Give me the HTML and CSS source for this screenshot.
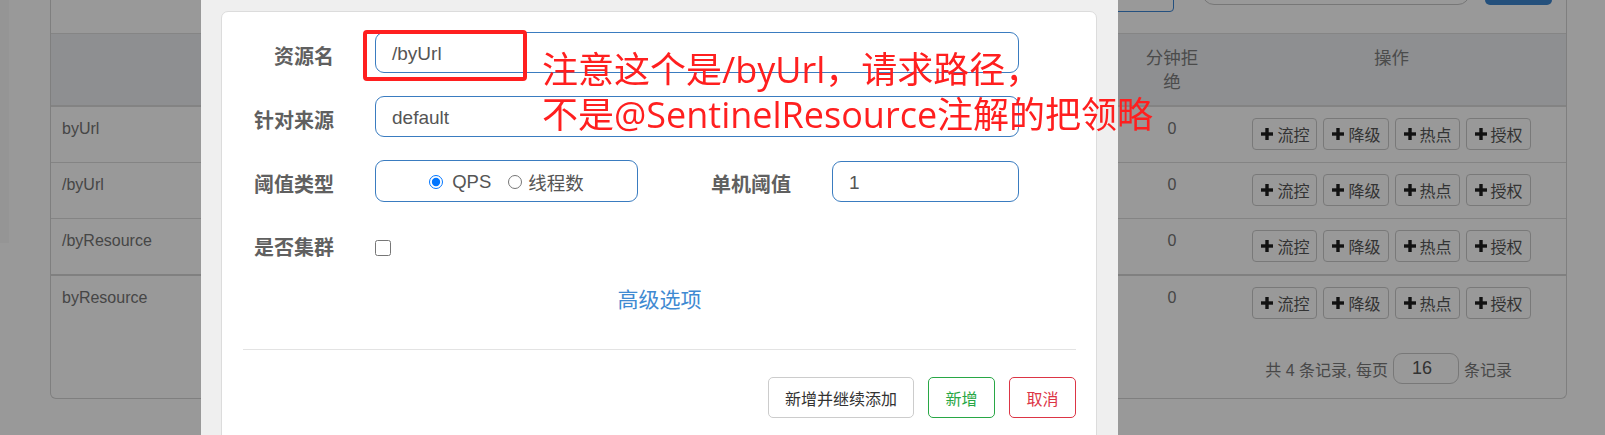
FILE: index.html
```html
<!DOCTYPE html>
<html lang="zh-CN">
<head>
<meta charset="utf-8">
<title>新增流控规则</title>
<link rel="stylesheet" href="styles.css">
</head>
<body>
<div class="page">
  <aside class="side-strip"></aside>
  <main class="content">
    <section class="panel">
      <div class="toolbar">
        <button class="tb-outline" type="button"></button>
        <div class="tb-search"></div>
        <button class="tb-primary" type="button"></button>
      </div>
      <div class="table">
        <div class="trow thead">
          <div class="cell"></div>
          <div class="cell num">分钟拒绝</div>
          <div class="cell ops-head">操作</div>
        </div>
        <div class="trow">
          <div class="cell name">byUrl</div>
          <div class="cell num">0</div>
          <div class="cell ops">
            <button class="op-btn" type="button"><svg class="plus" viewBox="0 0 12 12"><rect x="0" y="4.3" width="12" height="3.4"/><rect x="4.3" y="0" width="3.4" height="12"/></svg>流控</button>
            <button class="op-btn" type="button"><svg class="plus" viewBox="0 0 12 12"><rect x="0" y="4.3" width="12" height="3.4"/><rect x="4.3" y="0" width="3.4" height="12"/></svg>降级</button>
            <button class="op-btn" type="button"><svg class="plus" viewBox="0 0 12 12"><rect x="0" y="4.3" width="12" height="3.4"/><rect x="4.3" y="0" width="3.4" height="12"/></svg>热点</button>
            <button class="op-btn" type="button"><svg class="plus" viewBox="0 0 12 12"><rect x="0" y="4.3" width="12" height="3.4"/><rect x="4.3" y="0" width="3.4" height="12"/></svg>授权</button>
          </div>
        </div>
        <div class="trow">
          <div class="cell name">/byUrl</div>
          <div class="cell num">0</div>
          <div class="cell ops">
            <button class="op-btn" type="button"><svg class="plus" viewBox="0 0 12 12"><rect x="0" y="4.3" width="12" height="3.4"/><rect x="4.3" y="0" width="3.4" height="12"/></svg>流控</button>
            <button class="op-btn" type="button"><svg class="plus" viewBox="0 0 12 12"><rect x="0" y="4.3" width="12" height="3.4"/><rect x="4.3" y="0" width="3.4" height="12"/></svg>降级</button>
            <button class="op-btn" type="button"><svg class="plus" viewBox="0 0 12 12"><rect x="0" y="4.3" width="12" height="3.4"/><rect x="4.3" y="0" width="3.4" height="12"/></svg>热点</button>
            <button class="op-btn" type="button"><svg class="plus" viewBox="0 0 12 12"><rect x="0" y="4.3" width="12" height="3.4"/><rect x="4.3" y="0" width="3.4" height="12"/></svg>授权</button>
          </div>
        </div>
        <div class="trow thick">
          <div class="cell name">/byResource</div>
          <div class="cell num">0</div>
          <div class="cell ops">
            <button class="op-btn" type="button"><svg class="plus" viewBox="0 0 12 12"><rect x="0" y="4.3" width="12" height="3.4"/><rect x="4.3" y="0" width="3.4" height="12"/></svg>流控</button>
            <button class="op-btn" type="button"><svg class="plus" viewBox="0 0 12 12"><rect x="0" y="4.3" width="12" height="3.4"/><rect x="4.3" y="0" width="3.4" height="12"/></svg>降级</button>
            <button class="op-btn" type="button"><svg class="plus" viewBox="0 0 12 12"><rect x="0" y="4.3" width="12" height="3.4"/><rect x="4.3" y="0" width="3.4" height="12"/></svg>热点</button>
            <button class="op-btn" type="button"><svg class="plus" viewBox="0 0 12 12"><rect x="0" y="4.3" width="12" height="3.4"/><rect x="4.3" y="0" width="3.4" height="12"/></svg>授权</button>
          </div>
        </div>
        <div class="trow last">
          <div class="cell name">byResource</div>
          <div class="cell num">0</div>
          <div class="cell ops">
            <button class="op-btn" type="button"><svg class="plus" viewBox="0 0 12 12"><rect x="0" y="4.3" width="12" height="3.4"/><rect x="4.3" y="0" width="3.4" height="12"/></svg>流控</button>
            <button class="op-btn" type="button"><svg class="plus" viewBox="0 0 12 12"><rect x="0" y="4.3" width="12" height="3.4"/><rect x="4.3" y="0" width="3.4" height="12"/></svg>降级</button>
            <button class="op-btn" type="button"><svg class="plus" viewBox="0 0 12 12"><rect x="0" y="4.3" width="12" height="3.4"/><rect x="4.3" y="0" width="3.4" height="12"/></svg>热点</button>
            <button class="op-btn" type="button"><svg class="plus" viewBox="0 0 12 12"><rect x="0" y="4.3" width="12" height="3.4"/><rect x="4.3" y="0" width="3.4" height="12"/></svg>授权</button>
          </div>
        </div>
      </div>
      <div class="pager">
        <span>共 4 条记录, 每页</span>
        <span class="page-size">16</span>
        <span>条记录</span>
      </div>
    </section>
  </main>
</div>

<div class="backdrop"></div>

<div class="modal">
  <div class="modal-card">
    <div class="rule-form">
      <label class="f-label">资源名</label>
      <div class="field span3">/byUrl</div>

      <label class="f-label">针对来源</label>
      <div class="field span3">default</div>

      <label class="f-label">阈值类型</label>
      <div class="field radio-box">
        <input class="radio" type="radio" name="grade" checked>
        <span class="r-text first">QPS</span>
        <input class="radio second" type="radio" name="grade">
        <span class="r-text">线程数</span>
      </div>
      <label class="f-label col3">单机阈值</label>
      <div class="field">1</div>

      <label class="f-label plain">是否集群</label>
      <div class="check-cell"><input class="check" type="checkbox"></div>
    </div>
    <div class="advanced">高级选项</div>
    <div class="divider"></div>
    <div class="footer">
      <button class="btn btn-default" type="button">新增并继续添加</button>
      <button class="btn btn-green" type="button">新增</button>
      <button class="btn btn-red" type="button">取消</button>
    </div>
  </div>
</div>

<div class="annot-box"></div>
<div class="annot-text">注意这个是/byUrl，请求路径，<br>不是@SentinelResource注解的把领略</div>
</body>
</html>
```

FILE: styles.css
```css
* { box-sizing: border-box; }

html, body {
  margin: 0;
  height: 100%;
}

body {
  font-family: "Liberation Sans", "Noto Sans CJK SC", sans-serif;
  background: #fff;
  overflow: hidden;
  position: relative;
}

/* ---------- underlying page ---------- */
.page {
  display: flex;
  align-items: flex-start;
}

.side-strip {
  width: 9px;
  height: 243px;
  background: #f8f8f8;
  flex: none;
}

.content {
  flex: 1;
  padding-left: 41px;
  padding-right: 38px;
}

.panel {
  border: 1px solid #d4d4d4;
  border-top: none;
  border-radius: 0 0 6px 6px;
  padding-bottom: 14px;
}

.toolbar {
  height: 34px;
  border-bottom: 1px solid #dedede;
  display: flex;
  justify-content: flex-end;
  align-items: flex-start;
  padding-right: 14px;
}

.tb-outline {
  width: 100px;
  height: 30px;
  margin-top: -18px;
  border: 1px solid #3d86d4;
  border-radius: 4px;
  background: #fff;
  padding: 0;
}

.tb-search {
  width: 268px;
  height: 34px;
  margin-top: -29px;
  margin-left: 28px;
  border: 1px solid #c6c6c6;
  border-radius: 12px;
}

.tb-primary {
  width: 67px;
  height: 34px;
  margin-top: -29px;
  margin-left: 15px;
  border: none;
  border-radius: 5px;
  background: #3c86cf;
  padding: 0;
}

.trow {
  display: grid;
  grid-template-columns: 1fr 56px 366px;
  height: 56px;
  border-bottom: 1px solid #dcdcdc;
}

.trow.thead {
  height: 73px;
  background: #edeff2;
  border-bottom: 2px solid #dadada;
}

.trow.thick {
  height: 57px;
  border-bottom: 2px solid #d6d6d6;
}

.trow.last {
  border-bottom: none;
}

.cell {
  font-size: 16px;
  line-height: 24px;
  color: #757575;
  padding-top: 10px;
}

.thead .cell {
  font-size: 17.5px;
  padding-top: 12px;
  color: #7e7e7e;
}

.cell.name {
  padding-left: 11px;
}

.cell.num {
  text-align: center;
}

.cell.ops-head {
  padding-left: 17px;
  text-align: center;
}

.cell.ops {
  padding-left: 17px;
  padding-top: 11px;
  display: flex;
  justify-content: center;
  align-items: flex-start;
  gap: 6px;
}

.op-btn {
  height: 32px;
  display: flex;
  align-items: center;
  gap: 4px;
  padding: 0 7px 0 8px;
  border: 1px solid #cacaca;
  border-radius: 4px;
  background: #fff;
  font-family: "Liberation Sans", "Noto Sans CJK SC", sans-serif;
  font-size: 16px;
  color: #555;
}

.plus {
  width: 12px;
  height: 12px;
  fill: #1e1e1e;
  flex: none;
}

.pager {
  display: flex;
  justify-content: flex-end;
  align-items: center;
  gap: 5px;
  padding-right: 54px;
  margin-top: 21px;
  font-size: 16px;
  color: #787878;
}

.page-size {
  width: 66px;
  height: 31px;
  border: 1px solid #c9c9c9;
  border-radius: 9px;
  font-size: 18px;
  line-height: 29px;
  color: #555;
  padding-left: 18px;
}

/* ---------- overlay & modal ---------- */
.backdrop {
  position: fixed;
  inset: 0;
  background: rgba(0, 0, 0, 0.4);
}

.modal {
  position: fixed;
  left: 201px;
  top: 0;
  width: 917px;
  height: 100%;
  background: #efefef;
  padding: 11px 21px 0 20px;
  overflow: hidden;
}

.modal-card {
  background: #fff;
  border: 1px solid #dcdcdc;
  border-radius: 7px;
  height: 520px;
  padding: 20px 20px 0 21px;
}

.rule-form {
  display: grid;
  grid-template-columns: 91px 263px 112px 187px;
  grid-template-rows: 41px 41px 42px 46px;
  column-gap: 41px;
  row-gap: 23px;
  align-items: center;
}

.f-label {
  grid-column: 1;
  text-align: right;
  font-size: 20px;
  font-weight: bold;
  color: #606060;
  line-height: 28px;
  padding-top: 8px;
  white-space: nowrap;
}

.f-label.col3 {
  grid-column: 3;
}

.f-label.plain {
  padding-top: 0;
}

.field {
  height: 41px;
  border: 1px solid #3a7cc0;
  border-radius: 9px;
  font-size: 19px;
  color: #555;
  padding: 3px 16px 0;
  display: flex;
  align-items: center;
}

.field.span3 {
  grid-column: 2 / 5;
}

.radio-box {
  height: 42px;
  justify-content: center;
  padding: 2px 0 0 0;
}

.radio {
  width: 14px;
  height: 14px;
  margin: 0;
}

.radio.second {
  margin-left: 17px;
}

.r-text {
  font-size: 18.5px;
  color: #555;
  margin-left: 6px;
}

.r-text.first {
  margin-left: 9px;
}

.check-cell {
  display: flex;
  align-items: center;
}

.check {
  width: 16px;
  height: 16px;
  margin: 0;
}

.advanced {
  text-align: center;
  font-size: 21px;
  line-height: 30px;
  color: #3f8ad2;
  margin-top: 14px;
}

.divider {
  height: 1px;
  background: #e3e3e3;
  margin-top: 34px;
}

.footer {
  display: flex;
  justify-content: flex-end;
  gap: 14px;
  margin-top: 27px;
}

.btn {
  height: 41px;
  padding: 0 16px;
  background: #fff;
  border: 1px solid #cccccc;
  border-radius: 5px;
  font-family: "Liberation Sans", "Noto Sans CJK SC", sans-serif;
  font-size: 16px;
  color: #333;
}

.btn-green {
  border-color: #28a745;
  color: #28a745;
  width: 67px;
  padding: 0;
}

.btn-red {
  border-color: #dc3545;
  color: #dc3545;
  width: 67px;
  padding: 0;
}

/* ---------- screenshot annotation ---------- */
.annot-box {
  position: absolute;
  left: 363px;
  top: 30px;
  width: 164px;
  height: 51px;
  border: 4px solid #ff1f1f;
  border-radius: 4px;
}

.annot-text {
  position: absolute;
  left: 542px;
  top: 47px;
  font-family: "Open Sans", "Noto Sans CJK SC", sans-serif;
  font-size: 36px;
  line-height: 45px;
  color: #ff1f1f;
  white-space: nowrap;
}

.annot-text br + * { letter-spacing: 0; }
```
